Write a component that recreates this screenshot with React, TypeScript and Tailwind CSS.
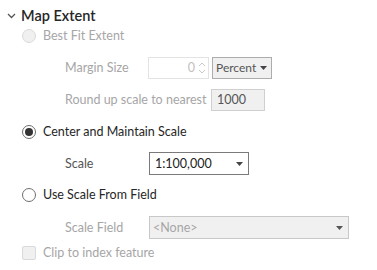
import React from "react";

const font = { fontFamily: 'Lato, "Open Sans", sans-serif' };

function Radio({ checked, disabled }: { checked?: boolean; disabled?: boolean }) {
  return (
    <span
      className={`flex h-[14px] w-[14px] shrink-0 items-center justify-center rounded-full border ${
        disabled ? "border-[#dadada] bg-[#f0f0f0]" : "border-[#6e6e6e] bg-white"
      }`}
    >
      {checked && <span className="h-[8px] w-[8px] rounded-full bg-[#333333]" />}
    </span>
  );
}

function Caret({ color = "#444" }: { color?: string }) {
  return (
    <svg width="7" height="4" viewBox="0 0 7 4">
      <path d="M0 0 H7 L3.5 4 Z" fill={color} />
    </svg>
  );
}

export default function App() {
  return (
    <div className="h-[270px] w-[377px] overflow-hidden bg-white text-[12.5px] leading-[16px] text-[#262626]" style={font}>
      <div className="flex h-[18px] items-center pl-[7px] mt-[7px]">
        <svg width="9" height="8" viewBox="0 0 9 8" className="mr-[5px]">
          <path d="M1 2 L4.5 5.5 L8 2" stroke="#555" strokeWidth="1.3" fill="none" />
        </svg>
        <span className="whitespace-nowrap text-[14.5px] font-semibold leading-[18px] text-[#262626]">Map Extent</span>
      </div>

      <div className="mt-[1px] flex h-[20px] items-center pl-[22px]">
        <Radio disabled />
        <span className="ml-[7px] whitespace-nowrap text-[#a6a6a6]">Best Fit Extent</span>
      </div>

      <div className="mt-[11px] flex h-[22px] items-center pl-[65px]">
        <span className="w-[83px] shrink-0 whitespace-nowrap text-[#a6a6a6]">Margin Size</span>
        <div className="flex h-[22px] w-[61px] shrink-0 items-center justify-end border border-[#e3e3e3] bg-white pr-[2px]">
          <span className="mr-[3px] text-[#c0c0c0]">0</span>
          <svg width="8" height="18" viewBox="0 0 8 18">
            <path d="M1 7 L4 4 L7 7" stroke="#c8c8c8" strokeWidth="1" fill="none" />
            <path d="M1 11 L4 14 L7 11" stroke="#c8c8c8" strokeWidth="1" fill="none" />
          </svg>
        </div>
        <div className="ml-[3px] flex h-[22px] w-[60px] shrink-0 items-center justify-between border border-[#acacac] bg-[#f0f0f0] pl-[3px] pr-[4px] text-[#555]">
          <span className="whitespace-nowrap text-[12px]">Percent</span>
          <Caret />
        </div>
      </div>

      <div className="mt-[10px] flex h-[22px] items-center pl-[65px]">
        <span className="w-[146px] shrink-0 whitespace-nowrap text-[#a6a6a6]">Round up scale to nearest</span>
        <div className="flex h-[22px] w-[54px] shrink-0 items-center border border-[#cfcfcf] bg-[#f0f0f0] pl-[5px] text-[#555]">
          1000
        </div>
      </div>

      <div className="mt-[10px] flex h-[22px] items-center pl-[22px]">
        <Radio checked />
        <span className="ml-[7px] whitespace-nowrap">Center and Maintain Scale</span>
      </div>

      <div className="mt-[9px] flex h-[23px] items-center pl-[65px]">
        <span className="w-[84px] shrink-0 whitespace-nowrap text-[#555]">Scale</span>
        <div className="flex h-[23px] w-[100px] shrink-0 items-center justify-between border border-[#7a7a7a] bg-white pl-[5px] pr-[5px] text-[#222]">
          <span>1:100,000</span>
          <Caret />
        </div>
      </div>

      <div className="mt-[9px] flex h-[22px] items-center pl-[22px]">
        <Radio />
        <span className="ml-[7px] whitespace-nowrap">Use Scale From Field</span>
      </div>

      <div className="mt-[10px] flex h-[23px] items-center pl-[65px]">
        <span className="w-[84px] shrink-0 whitespace-nowrap text-[#a6a6a6]">Scale Field</span>
        <div className="flex h-[23px] w-[200px] shrink-0 items-center justify-between border border-[#c8c8c8] bg-[#f0f0f0] pl-[3px] pr-[5px] text-[#a6a6a6]">
          <span>&lt;None&gt;</span>
          <Caret color="#555" />
        </div>
      </div>

      <div className="mt-[3px] flex h-[22px] items-center pl-[22px]">
        <span className="h-[14px] w-[14px] shrink-0 rounded-[2px] border border-[#dadada] bg-[#f0f0f0]" />
        <span className="ml-[7px] whitespace-nowrap text-[#a6a6a6]">Clip to index feature</span>
      </div>
    </div>
  );
}
